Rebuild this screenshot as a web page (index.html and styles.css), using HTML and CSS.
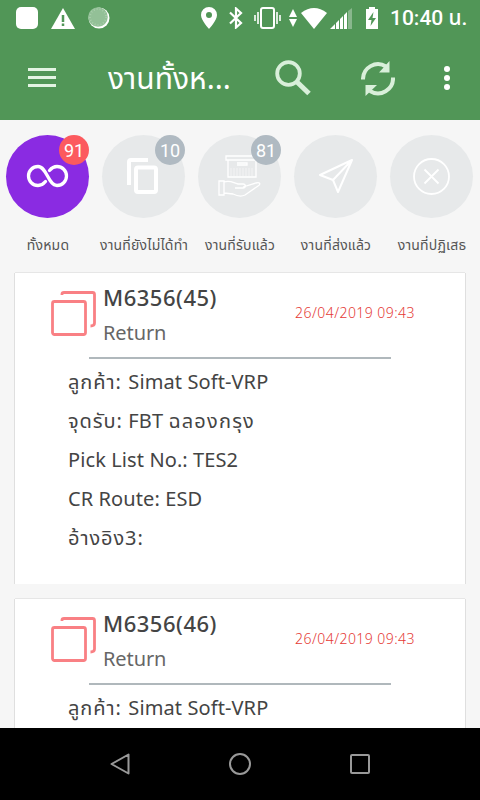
FILE: index.html
```html
<!DOCTYPE html>
<html lang="th">
<head>
  <meta charset="UTF-8">
  <title>งานทั้งหมด</title>
  <link rel="stylesheet" href="styles.css">
</head>
<body>

<div class="status-bar">
  <div class="notifications">
    <span class="app-square"></span>
    <svg width="24" height="21" viewBox="0 0 24 21"><path d="M12 0L24 21H0z" fill="#fff"/><path d="M12 7v7M12 15.500v2.500" stroke="#519657" stroke-width="2.500"/></svg>
    <svg width="22" height="22" viewBox="0 0 22 22"><circle cx="11" cy="11" r="10.500" fill="#fff"/><circle cx="10" cy="10" r="9.800" fill="#93c097"/><circle cx="10" cy="10" r="8" fill="none" stroke="#a9cdab" stroke-width="2" stroke-dasharray="1 2"/></svg>
  </div>
  <div class="system">
    <svg class="pin" width="16" height="22" viewBox="0 0 16 22"><path fill-rule="evenodd" d="M8 0a8 8 0 0 0-8 8c0 5.500 8 14 8 14s8-8.500 8-14a8 8 0 0 0-8-8zm0 5a3 3 0 1 1 0 6 3 3 0 0 1 0-6z" fill="#fff"/></svg>
    <svg class="bluetooth" width="14" height="22" viewBox="0 0 14 22"><path d="M1 5.500L12 16l-5 4.500V1.500L12 6 1 16.500" fill="none" stroke="#fff" stroke-width="2.200"/></svg>
    <svg class="vibrate" width="27" height="22" viewBox="0 0 27 22"><rect x="7" y="1" width="13" height="20" rx="2" fill="none" stroke="#fff" stroke-width="2"/><path d="M4 5v12M1 8v6M23 5v12M26 8v6" stroke="#fff" stroke-width="1.600"/></svg>
    <svg class="traffic" width="8" height="18" viewBox="0 0 8 18"><path d="M4 0l4 8H0zM4 18l4-8H0z" fill="#fff"/></svg>
    <svg class="wifi" width="26" height="21" viewBox="0 0 26 21"><path d="M0 5Q13-5 26 5L13 21z" fill="#fff"/></svg>
    <svg class="signal" width="22" height="21" viewBox="0 0 22 21"><path d="M0 21l5-5v5zM6 15l3-3v9H6zM10 11l3-3v13h-3zM14 7l3-3v17h-3z" fill="#fff"/><path d="M18 3l4-3v21h-4z" fill="#89b78d"/></svg>
    <svg class="battery" width="12" height="22" viewBox="0 0 12 22"><path d="M3 0h6v2h3v20H0V2h3z" fill="#fff"/><path d="M7.500 5L2 13h3.500L4.500 19 10 11H6.500z" fill="#519657"/></svg>
    <span class="clock">10:40 น.</span>
  </div>
</div>

<div class="app-bar">
  <svg class="menu" width="28" height="21" viewBox="0 0 28 21"><path d="M0 2.500h28M0 10.500h28M0 18.500h28" stroke="#e3f4e3" stroke-width="3"/></svg>
  <h1 class="title">งานทั้งห...</h1>
  <svg class="search" width="37" height="37" viewBox="0 0 37 37"><circle cx="13.500" cy="13.500" r="11.300" fill="none" stroke="#d9efda" stroke-width="3.800"/><path d="M22 22L34 33.500" stroke="#d9efda" stroke-width="5"/></svg>
  <svg class="refresh" width="34" height="37" viewBox="0 0 34 37"><path d="M2 19.500A15 15 0 0 1 25 6.500M32 17.500A15 15 0 0 1 9 31" fill="none" stroke="#d9efda" stroke-width="4"/><path d="M28.500 1v11.500H18zM4.500 36V25H16z" fill="#d9efda"/></svg>
  <svg class="more" width="6" height="24" viewBox="0 0 6 24"><circle cx="3" cy="3" r="3"/><circle cx="3" cy="12" r="3"/><circle cx="3" cy="21" r="3"/></svg>
</div>

<div class="filters">
  <div class="filter active">
    <div class="circle">
      <svg class="infinity" width="43" height="24" viewBox="0 0 43 24"><path d="M19.500 17.500C17 20.500 15 21.500 12 21.500a9.500 9.500 0 0 1 0-19c9 0 10 19 19 19a9.500 9.500 0 0 0 0-19c-3 0-5 1-7.500 4" fill="none" stroke="#fff" stroke-width="3.300" stroke-linecap="round"/></svg>
      <span class="badge">91</span>
    </div>
    <div class="label">ทั้งหมด</div>
  </div>
  <div class="filter">
    <div class="circle">
      <svg class="copy" width="31" height="36" viewBox="0 0 31 36"><path d="M2 27V4q0-2 2-2h17" fill="none" stroke="#fff" stroke-width="4"/><rect x="9" y="9.500" width="20" height="24.500" rx="2" fill="none" stroke="#fff" stroke-width="4"/></svg>
      <span class="badge">10</span>
    </div>
    <div class="label">งานที่ยังไม่ได้ทำ</div>
  </div>
  <div class="filter">
    <div class="circle">
      <svg width="43" height="43" viewBox="0 0 43 43"><g fill="none" stroke="#fff" stroke-width="1.300"><path d="M8 1h31v4H8zM10 5v17h28V5M19 8h10v2H19M1 26h5v14H1zM6 27c7-2 9 1 14 2h5c3 0 3 4 0 4h-8M25 32l13-4c4-1 5 1 2 3L27 40c-4 2-8 1-12-1l-9-1"/><path d="M13 13v8M16 13v8M19 13v8M22 13v8M25 13v8M28 13v8M31 13v8M34 13v8" stroke-width=".500"/></g></svg>
      <span class="badge">81</span>
    </div>
    <div class="label">งานที่รับแล้ว</div>
  </div>
  <div class="filter">
    <div class="circle">
      <svg width="36" height="37" viewBox="0 0 36 37"><path d="M34 2L2 17l13 5 5 12zM34 2L15 22" fill="none" stroke="#fff" stroke-width="2" stroke-linejoin="round"/></svg>
    </div>
    <div class="label">งานที่ส่งแล้ว</div>
  </div>
  <div class="filter">
    <div class="circle">
      <svg width="37" height="37" viewBox="0 0 37 37"><circle cx="18.500" cy="18.500" r="17.500" fill="none" stroke="#fff" stroke-width="1.800"/><path d="M11.500 11.500l14 14M25.500 11.500l-14 14" stroke="#fff" stroke-width="1.800"/></svg>
    </div>
    <div class="label">งานที่ปฏิเสธ</div>
  </div>
</div>

<div class="jobs">
  <div class="card">
    <div class="card-head">
      <svg width="45" height="45" viewBox="0 0 45 45"><path d="M11 4V3q0-1.500 2-1.500h28.500q2 0 2 2V32q0 3-4 3" fill="none" stroke="#f98084" stroke-width="2.800"/><rect x="1.500" y="10.500" width="33" height="33" rx="2" fill="#fff" stroke="#f98084" stroke-width="2.800"/></svg>
      <div class="job">
        <h2>M6356(45)</h2>
        <p>Return</p>
      </div>
      <span class="date">26/04/2019 09:43</span>
    </div>
    <hr>
    <ul class="details">
      <li><span class="thai">ลูกค้า:</span> Simat Soft-VRP</li>
      <li><span class="thai">จุดรับ:</span> FBT <span class="place">ฉลองกรุง</span></li>
      <li>Pick List No.: TES2</li>
      <li>CR Route: ESD</li>
      <li><span class="thai">อ้างอิง3:</span></li>
    </ul>
  </div>
  <div class="card">
    <div class="card-head">
      <svg width="45" height="45" viewBox="0 0 45 45"><path d="M11 4V3q0-1.500 2-1.500h28.500q2 0 2 2V32q0 3-4 3" fill="none" stroke="#f98084" stroke-width="2.800"/><rect x="1.500" y="10.500" width="33" height="33" rx="2" fill="#fff" stroke="#f98084" stroke-width="2.800"/></svg>
      <div class="job">
        <h2>M6356(46)</h2>
        <p>Return</p>
      </div>
      <span class="date">26/04/2019 09:43</span>
    </div>
    <hr>
    <ul class="details">
      <li><span class="thai">ลูกค้า:</span> Simat Soft-VRP</li>
    </ul>
  </div>
</div>

<div class="nav-bar">
  <svg width="20" height="22" viewBox="0 0 20 22"><path d="M18.500 1.500v19L1.500 11z" fill="none" stroke="#999" stroke-width="2" stroke-linejoin="round"/></svg>
  <svg width="22" height="22" viewBox="0 0 22 22"><circle cx="11" cy="11" r="10" fill="none" stroke="#999" stroke-width="2"/></svg>
  <svg width="20" height="20" viewBox="0 0 20 20"><rect x="1" y="1" width="18" height="18" rx="1" fill="none" stroke="#999" stroke-width="2"/></svg>
</div>

</body>
</html>
```

FILE: styles.css
```css
* {
  box-sizing: border-box;
}
body {
  margin: 0;
  width: 480px;
  height: 800px;
  overflow: hidden;
  display: flex;
  flex-direction: column;
  background: #f6f6f6;
  font-family: "Noto Sans", "Noto Sans Thai", sans-serif;
  color: #444;
}
h1, h2, p, ul {
  margin: 0;
  padding: 0;
  font-weight: normal;
}
svg {
  display: block;
  flex-shrink: 0;
}
.status-bar {
  height: 36px;
  background: #519657;
  display: flex;
  align-items: center;
  justify-content: space-between;
  padding: 0 13px 0 16px;
}
.notifications, .system {
  display: flex;
  align-items: center;
}
.notifications {
  gap: 13px;
}
.app-square {
  width: 22px;
  height: 22px;
  border-radius: 5px;
  background: #fff;
}
.bluetooth {
  margin-left: 12px;
}
.vibrate {
  margin-left: 11px;
}
.traffic {
  margin-left: 8px;
}
.wifi {
  margin-left: 4px;
}
.signal {
  margin-left: 3px;
}
.battery {
  margin: 0 12px 0 14px;
}
.clock {
  width: 77px;
  white-space: nowrap;
  font: 500 21px/38px Roboto, "Noto Sans Thai", sans-serif;
  color: #fff;
}
.app-bar {
  height: 84px;
  flex-shrink: 0;
  background: #519657;
  display: flex;
  align-items: center;
  padding: 0 30px 0 28px;
}
.menu {
  margin-top: -2px;
}
.title {
  width: 123px;
  margin-left: 52px;
  font-size: 30px;
  line-height: 84px;
  white-space: nowrap;
  color: #fff;
}
.search {
  margin-left: 44px;
}
.refresh {
  margin-left: 49px;
}
.more {
  margin-left: auto;
  fill: #fff;
}
.filters {
  height: 150px;
  flex-shrink: 0;
  display: flex;
  padding-top: 15px;
}
.filter {
  width: 96px;
  flex-shrink: 0;
  display: flex;
  flex-direction: column;
  align-items: center;
}
.circle {
  position: relative;
  width: 83px;
  height: 83px;
  margin-right: 1px;
  border-radius: 50%;
  background: #e7e9ea;
  display: flex;
  align-items: center;
  justify-content: center;
}
.circle svg {
  margin-bottom: 1px;
}
.circle .copy {
  margin-right: 3px;
}
.circle .infinity {
  margin: 0 1px 2px 0;
}
.active .circle {
  background: #8a2be2;
}
.badge {
  position: absolute;
  top: 0;
  right: 0;
  width: 30px;
  height: 30px;
  border-radius: 50%;
  background: #b0bac2;
  color: #fff;
  font: 18px/31px Roboto, sans-serif;
  text-align: center;
}
.active .badge {
  background: #fc5a5e;
}
.label {
  margin-top: 17px;
  font-size: 14px;
  line-height: 20px;
  letter-spacing: 0.2px;
  white-space: nowrap;
  color: #555;
}
.jobs {
  height: 458px;
  overflow: hidden;
  padding: 3px 15px 0;
}
.card {
  height: 311px;
  margin-bottom: 15px;
  background: #fff;
  box-shadow: 0 -1px 0 #e6e6e6, 1px 0 0 #dfdfdf, -1px 0 0 #dfdfdf;
}
.card-head {
  height: 84px;
  display: flex;
  align-items: flex-start;
  padding: 0 50px 0 36px;
}
.card-head svg {
  margin-top: 18px;
}
.job {
  margin-left: 7px;
  padding-top: 7px;
}
.job h2 {
  font-size: 22px;
  font-weight: 500;
  line-height: 35px;
  letter-spacing: 0.5px;
}
.job p {
  font-size: 20px;
  line-height: 36px;
  letter-spacing: -0.1px;
  color: #666;
}
.date {
  margin: 30px 0 0 auto;
  font-size: 14px;
  font-weight: 300;
  line-height: 20px;
  letter-spacing: 0.45px;
  white-space: nowrap;
  color: #e53935;
}
hr {
  height: 2px;
  margin: 0 74px;
  border: none;
  background: #b0b8bc;
}
.details {
  padding: 3px 0 0 53px;
  list-style: none;
  font-size: 20px;
  line-height: 39px;
  letter-spacing: 0.1px;
  white-space: nowrap;
}
.details li {
  height: 39px;
}
.thai {
  display: inline-block;
  min-width: 55px;
  letter-spacing: 0.9px;
}
.place {
  letter-spacing: 1.2px;
}
.nav-bar {
  height: 72px;
  flex-shrink: 0;
  background: #000;
  display: flex;
  align-items: center;
  justify-content: center;
  gap: 99px;
}
```
